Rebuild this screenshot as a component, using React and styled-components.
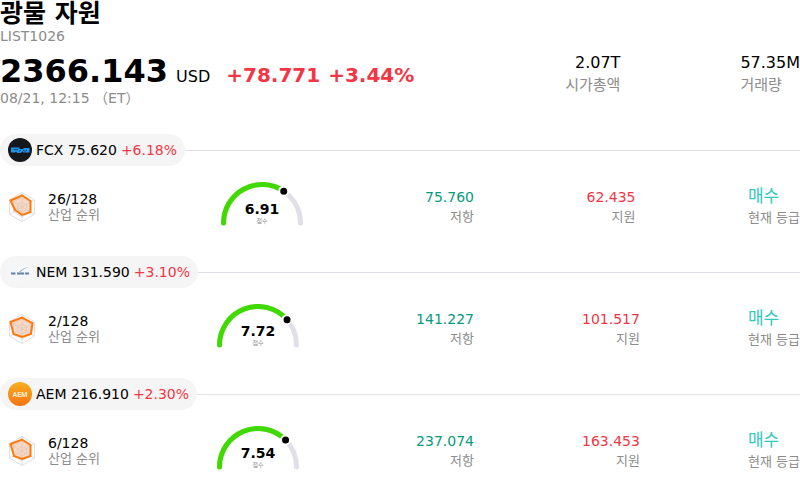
import styled, {createGlobalStyle} from "styled-components";

const stocks = [
    {
        symbol: "FCX", price: "75.620", change: "+6.18%", rank: "26/128", score: 6.91,
        resistance: "75.760", support: "62.435", radar: "2.5,9.5 14,4.5 22.5,10 22.5,21 14,24 7,19"
    },
    {
        symbol: "NEM", price: "131.590", change: "+3.10%", rank: "2/128", score: 7.72,
        resistance: "141.227", support: "101.517", radar: "2.5,9 14,4.5 24.5,10 23,21 14,24 5.5,21"
    },
    {
        symbol: "AEM", price: "216.910", change: "+2.30%", rank: "6/128", score: 7.54,
        resistance: "237.074", support: "163.453", radar: "2.5,9 14,4.5 22.5,10 22.5,21 14,24 6,21"
    }
];

const Logo = ({symbol}) => {
    if (symbol === "FCX") {
        return (
            <svg width="24" height="24" viewBox="0 0 24 24" aria-hidden="true">
                <circle cx="12" cy="12" r="12" fill="#14181d"/>
                <path d="M3 9.500h8.500v1.500h3.500l1-1h5.500v4.500h-6l-1-1-2 1.500H9.500L8 13.500l-1 1H3z" fill="#1b93e6"/>
                <path d="M5.500 11.500h4.500M11 13.500l2-1.500M15.500 13v-1l1.500 1.500 1.500-1.500v1" stroke="#14496f" fill="none"/>
            </svg>
        );
    }

    if (symbol === "NEM") {
        return (
            <svg width="24" height="24" viewBox="0 0 24 24" aria-hidden="true">
                <circle cx="12" cy="12" r="12" fill="#f4f6f8"/>
                <path d="M11 12c3-3 6-4.500 10.500-5-4 1-7 2.500-9 5z" fill="#8fabc6"/>
                <path d="M3 13.500h4.500M9 13.500h7M17 13.500h4" stroke="#5f82ab" strokeWidth="2"/>
            </svg>
        );
    }

    return (
        <svg width="24" height="24" viewBox="0 0 24 24" aria-hidden="true">
            <defs>
                <linearGradient id="aem" x1="0" y1="0" x2="0" y2="1">
                    <stop offset="0" stopColor="#f9b01e"/>
                    <stop offset="1" stopColor="#f57412"/>
                </linearGradient>
            </defs>
            <circle cx="12" cy="12" r="12" fill="url(#aem)"/>
            <LogoText x="12" y="15">AEM</LogoText>
        </svg>
    );
}

const Radar = ({points}) => {
    return (
        <svg width="28" height="32" viewBox="0 0 28 32" aria-hidden="true">
            <g fill="none" stroke="#dfdfea">
                <path d="M14 1.500l12.500 7.250v14.500L14 30.500 1.500 23.250V8.750z"/>
                <path d="M14 6l8.500 5v10L14 26l-8.500-5V11z"/>
                <path d="M14 11l4.500 2.500v5L14 21l-4.500-2.500v-5z"/>
                <path d="M14 1.500v29M1.500 8.750l25 14.500M26.500 8.750l-25 14.500"/>
            </g>
            <polygon points={points} fill="#f0b48f" fillOpacity=".5" stroke="#ff7a0d" strokeWidth="2"/>
        </svg>
    );
}

const Gauge = ({score}) => {
    const angle = Math.PI * (1 - score / 10);
    const x = 50 + 38.5 * Math.cos(angle);
    const y = 41 - 38.5 * Math.sin(angle);

    return (
        <svg width="100" height="50" viewBox="0 0 100 50" role="img" aria-label={`점수 ${score}`}>
            <g fill="none" strokeWidth="5" strokeLinecap="round">
                <path d="M11.500 41a38.500 38.500 0 0 1 77 0" stroke="#e0e0e9"/>
                <path d={`M11.5 41A38.5 38.5 0 0 1 ${x} ${y}`} stroke="#40d900"/>
            </g>
            <circle cx={x} cy={y} r="4.500" fill="#000" stroke="#fff" strokeWidth="2"/>
            <GaugeScore x="50" y="32">{score}</GaugeScore>
            <GaugeLabel x="50" y="41">점수</GaugeLabel>
        </svg>
    );
}

const App = () => {
    return (
        <StyledPage>
            <GlobalStyle/>
            <StyledTitle>광물 자원</StyledTitle>
            <StyledCode>LIST1026</StyledCode>
            <StyledSummary>
                <div>
                    <StyledQuote>
                        <StyledIndex>2366.143</StyledIndex>
                        <StyledCurrency>USD</StyledCurrency>
                        <StyledChange>
                            <span>+78.771</span>
                            <span>+3.44%</span>
                        </StyledChange>
                    </StyledQuote>
                    <StyledDate>08/21, 12:15 （ET）</StyledDate>
                </div>
                <StyledTotals>
                    <StyledTotal $align="right">
                        <dd>2.07T</dd>
                        <dt>시가총액</dt>
                    </StyledTotal>
                    <StyledTotal>
                        <dd>57.35M</dd>
                        <dt>거래량</dt>
                    </StyledTotal>
                </StyledTotals>
            </StyledSummary>
            {
                stocks.map(stock => {
                    return (
                        <StyledStock key={stock.symbol}>
                            <StyledStockHeader>
                                <StyledPill>
                                    <Logo symbol={stock.symbol}/>
                                    <span>{stock.symbol} {stock.price}</span>
                                    <StyledRise>{stock.change}</StyledRise>
                                </StyledPill>
                            </StyledStockHeader>
                            <StyledStockBody>
                                <StyledRank>
                                    <Radar points={stock.radar}/>
                                    <StyledRankText>
                                        <div>{stock.rank}</div>
                                        <StyledLabel>산업 순위</StyledLabel>
                                    </StyledRankText>
                                </StyledRank>
                                <Gauge score={stock.score}/>
                                <StyledLevel $color="#089981">
                                    <div>{stock.resistance}</div>
                                    <StyledLabel>저항</StyledLabel>
                                </StyledLevel>
                                <StyledLevel $color="#f23645">
                                    <div>{stock.support}</div>
                                    <StyledLabel>지원</StyledLabel>
                                </StyledLevel>
                                <StyledRating>
                                    <div>매수</div>
                                    <StyledLabel>현재 등급</StyledLabel>
                                </StyledRating>
                            </StyledStockBody>
                        </StyledStock>
                    );
                })
            }
        </StyledPage>
    );
}

const GlobalStyle = createGlobalStyle`
    body {
        margin: 0;
        background-color: white;
        color: black;
        font-family: "DejaVu Sans", "Noto Sans CJK KR", sans-serif;
        font-size: 14px;
    }

    svg {
        display: block;
        flex-shrink: 0;
    }
`;

const StyledPage = styled.main`
    display: flex;
    flex-direction: column;
    white-space: nowrap;
`;

const StyledTitle = styled.h1`
    margin: 0;
    font-size: 25px;
    line-height: 28px;
`;

const StyledCode = styled.div`
    color: #8c8c8c;
    line-height: 16px;
`;

const StyledSummary = styled.section`
    display: flex;
    align-items: flex-start;
    justify-content: space-between;
    margin: 8px 0 28px;
`;

const StyledQuote = styled.div`
    display: flex;
    align-items: baseline;
    padding-top: 6px;
    line-height: 26px;
`;

const StyledIndex = styled.strong`
    font-size: 32px;
`;

const StyledCurrency = styled.span`
    margin: 0 16px 0 8px;
    font-size: 16px;
`;

const StyledChange = styled.strong`
    display: flex;
    gap: 8px;
    color: #f23645;
    font-size: 20px;
`;

const StyledDate = styled.div`
    color: #8c8c8c;
    line-height: 16px;
`;

const StyledTotals = styled.dl`
    display: flex;
    gap: 120px;
    margin: 0;
`;

const StyledTotal = styled.div`
    text-align: ${props => props.$align || "left"};

    dd {
        margin: 0;
        font-size: 16px;
        line-height: 22px;
    }

    dt {
        color: #8c8c8c;
        font-size: 15px;
        line-height: 22px;
    }
`;

const StyledStock = styled.section`
    padding-bottom: 24px;
`;

const StyledStockHeader = styled.header`
    display: flex;
    align-items: center;

    &::after {
        content: "";
        flex: 1;
        height: 1px;
        background-color: #e0e0e9;
    }
`;

const StyledPill = styled.div`
    display: flex;
    align-items: center;
    gap: 4px;
    height: 32px;
    padding: 0 8px;
    border-radius: 16px;
    background-color: #f5f5f5;
`;

const StyledRise = styled.span`
    color: #f23645;
`;

const StyledStockBody = styled.div`
    display: flex;
    align-items: center;
    justify-content: space-between;
    height: 50px;
    margin-top: 16px;
`;

const StyledRank = styled.div`
    display: flex;
    align-items: center;
    gap: 12px;
    padding-left: 8px;
`;

const StyledRankText = styled.div`
    line-height: 15px;
`;

const StyledLabel = styled.div`
    color: #8c8c8c;
    font-size: 13px;
`;

const StyledLevel = styled.div`
    color: ${props => props.$color};
    line-height: 19px;
    text-align: right;
`;

const StyledRating = styled.div`
    color: #33c9bd;
    font-size: 17px;
    line-height: 22px;
`;

const GaugeScore = styled.text`
    font-size: 14px;
    font-weight: 700;
    text-anchor: middle;
`;

const GaugeLabel = styled.text`
    fill: #8c8c8c;
    font-size: 6px;
    text-anchor: middle;
`;

const LogoText = styled.text`
    fill: #ffeeda;
    font-family: Roboto, sans-serif;
    font-size: 7px;
    font-weight: 700;
    text-anchor: middle;
`;

export default App;
